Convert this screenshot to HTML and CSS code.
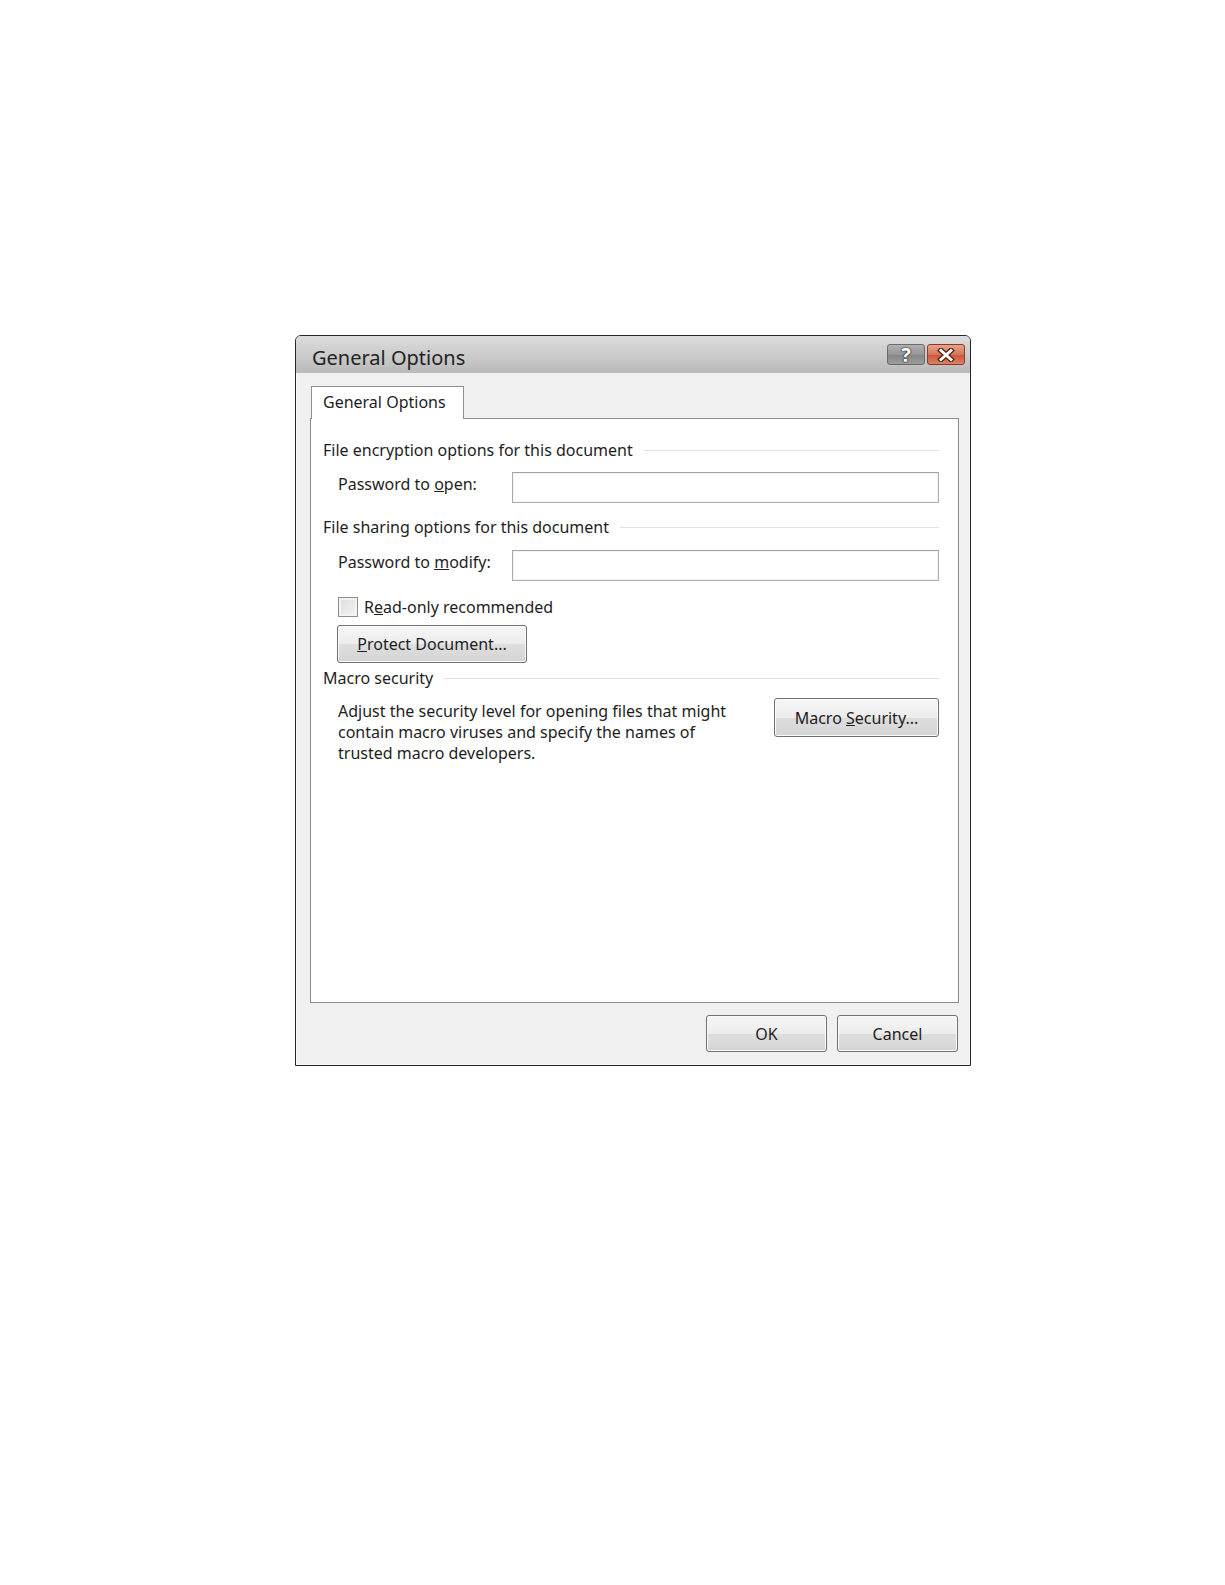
FILE: index.html
```html
<!DOCTYPE html>
<html lang="en">
<head>
    <meta charset="UTF-8">
    <title>General Options</title>
    <link rel="stylesheet" href="styles.css">
</head>
<body>
    <div class="dialog">
        <div class="titlebar">
            <span class="title">General Options</span>
            <div class="caption-buttons">
                <span class="cap-btn help">?</span>
                <span class="cap-btn close">
                    <svg width="20" height="14" viewBox="0 0 20 14">
                        <path d="M5 2.5 L15 11.5 M15 2.5 L5 11.5" stroke="#5a2216" stroke-width="5.5" stroke-linecap="square"/>
                        <path d="M5 2.5 L15 11.5 M15 2.5 L5 11.5" stroke="#fff" stroke-width="3" stroke-linecap="square"/>
                    </svg>
                </span>
            </div>
        </div>

        <div class="dialog-body">
            <div class="tabs">
                <div class="tab">General Options</div>
            </div>

            <div class="panel">
                <div class="group-head">
                    <span>File encryption options for this document</span>
                    <div class="rule"></div>
                </div>
                <div class="field-row">
                    <label>Password to <u>o</u>pen:</label>
                    <div class="textbox"></div>
                </div>

                <div class="group-head second">
                    <span>File sharing options for this document</span>
                    <div class="rule"></div>
                </div>
                <div class="field-row modify">
                    <label>Password to <u>m</u>odify:</label>
                    <div class="textbox"></div>
                </div>

                <div class="check-row">
                    <span class="checkbox"></span>
                    <span>R<u>e</u>ad-only recommended</span>
                </div>
                <button class="btn protect"><u>P</u>rotect Document...</button>

                <div class="group-head third">
                    <span>Macro security</span>
                    <div class="rule"></div>
                </div>
                <div class="macro-row">
                    <p>Adjust the security level for opening files that might contain macro viruses and specify the names of trusted macro developers.</p>
                    <button class="btn macro">Macro <u>S</u>ecurity...</button>
                </div>
            </div>

            <div class="footer">
                <button class="btn dlg">OK</button>
                <button class="btn dlg">Cancel</button>
            </div>
        </div>
    </div>
</body>
</html>
```

FILE: styles.css
```css
body {
    margin: 0;
    background-color: #fff;
    font-family: "Noto Sans", "Open Sans", sans-serif;
    color: #1e1e1e;
}
.dialog {
    margin: 335px 0 0 295px;
    width: 676px;
    box-sizing: border-box;
    border: 1px solid #262626;
    border-radius: 6px 6px 0 0;
    background-color: #f0f0f0;
    box-shadow: inset 1px 0 0 #fafafa, inset 0 -1px 0 #fafafa;
}
.titlebar {
    height: 37px;
    display: flex;
    justify-content: space-between;
    padding-left: 16px;
    padding-right: 5px;
    background: linear-gradient(#dcdcdc, #cacaca 55%, #b9b9b9);
    border-radius: 5px 5px 0 0;
}
.title {
    font-size: 20px;
    line-height: 37px;
    padding-top: 3px;
    color: #222;
}
.caption-buttons {
    display: flex;
    gap: 2px;
    margin-top: 8px;
}
.cap-btn {
    width: 38px;
    height: 21px;
    box-sizing: border-box;
    border-radius: 3px;
    display: flex;
    align-items: center;
    justify-content: center;
}
.help {
    border: 1px solid #6a6a6a;
    background: linear-gradient(#b2b2b2, #959595 50%, #858585 51%, #9c9c9c);
    color: #fff;
    font-weight: bold;
    font-size: 20px;
    line-height: 1;
    text-shadow: 0 0 2px #2a2a2a, 0 0 1px #2a2a2a, 0 0 1px #2a2a2a;
}
.close {
    border: 1px solid #8c3a26;
    background: linear-gradient(#e6a48c, #d6755a 50%, #c9563a 51%, #db8366);
}
.dialog-body {
    padding: 13px 11px 0 14px;
}
.tabs {
    display: flex;
    padding-left: 1px;
}
.tab {
    position: relative;
    z-index: 1;
    height: 33px;
    box-sizing: border-box;
    padding: 0 17px 0 11px;
    border: 1px solid #8e8f8f;
    border-bottom: none;
    background-color: #fff;
    font-size: 16px;
    line-height: 30px;
    margin-bottom: -1px;
}
.panel {
    height: 585px;
    box-sizing: border-box;
    border: 1px solid #898c95;
    background-color: #fff;
    padding: 21px 19px 0 12px;
    font-size: 16px;
}
.group-head {
    display: flex;
    align-items: center;
    height: 20px;
    line-height: 20px;
}
.group-head .rule {
    flex: 1;
    height: 1px;
    margin-left: 11px;
    background-color: #dde2e6;
}
.group-head.second {
    margin-top: 14px;
}
.group-head.third {
    margin-top: 5px;
}
.field-row {
    display: flex;
    align-items: flex-start;
    margin-top: 12px;
    padding-left: 15px;
}
.field-row.modify {
    margin-top: 13px;
}
.field-row label {
    width: 174px;
    line-height: 24px;
}
.textbox {
    flex: 1;
    height: 31px;
    box-sizing: border-box;
    border: 1px solid #abadb3;
    border-top-color: #a0a2a8;
    box-shadow: inset 0 0 0 1px #f4f4f4;
    background-color: #fff;
}
.check-row {
    display: flex;
    align-items: center;
    gap: 6px;
    margin-top: 16px;
    padding-left: 15px;
    line-height: 20px;
}
.checkbox {
    width: 20px;
    height: 20px;
    box-sizing: border-box;
    border: 1px solid #8f8f8f;
    background: linear-gradient(135deg, #dcdcdc, #f4f4f4);
    box-shadow: inset 0 0 0 2px #f3f3f3;
}
.btn {
    font-family: inherit;
    font-size: 16px;
    color: #1e1e1e;
    border: 1px solid #707070;
    border-radius: 3px;
    background: linear-gradient(#f6f6f6, #ececec 50%, #dedede 51%, #d4d4d4);
    box-shadow: inset 0 0 0 1px #fbfbfb;
    padding: 0;
}
.protect {
    display: block;
    margin: 8px 0 0 14px;
    width: 190px;
    height: 38px;
}
.macro-row {
    display: flex;
    justify-content: space-between;
    align-items: flex-start;
    margin-top: 10px;
    padding-left: 15px;
}
.macro-row p {
    margin: 3px 0 0;
    width: 410px;
    line-height: 21px;
}
.macro {
    width: 165px;
    height: 39px;
}
.footer {
    display: flex;
    justify-content: flex-end;
    gap: 10px;
    padding: 12px 1px 13px 0;
}
.dlg {
    width: 121px;
    height: 37px;
}
```
